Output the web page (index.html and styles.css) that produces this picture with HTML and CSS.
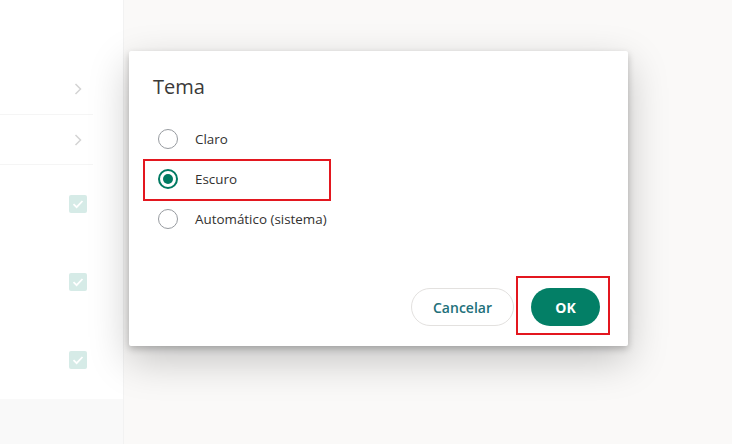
FILE: index.html
```html
<!DOCTYPE html>
<html lang="pt">
<head>
<meta charset="utf-8">
<title>Tema</title>
<link rel="stylesheet" href="styles.css">
</head>
<body>
<div class="app">
  <aside class="side">
    <div class="side-head"></div>
    <div class="row nav"><span class="icon chev"><svg width="8" height="12" viewBox="0 0 8 12"><path d="M1.5 1 L6.5 6 L1.5 11" fill="none" stroke="#d4d4d4" stroke-width="1.5"/></svg></span></div>
    <div class="row nav"><span class="icon chev"><svg width="8" height="12" viewBox="0 0 8 12"><path d="M1.5 1 L6.5 6 L1.5 11" fill="none" stroke="#d4d4d4" stroke-width="1.5"/></svg></span></div>
    <div class="row check"><span class="icon box"><svg width="18" height="18" viewBox="0 0 18 18"><path d="M4.5 9.2 L7.6 12.2 L13.5 6" fill="none" stroke="#fff" stroke-width="1.8"/></svg></span></div>
    <div class="row check"><span class="icon box"><svg width="18" height="18" viewBox="0 0 18 18"><path d="M4.5 9.2 L7.6 12.2 L13.5 6" fill="none" stroke="#fff" stroke-width="1.8"/></svg></span></div>
    <div class="row check"><span class="icon box"><svg width="18" height="18" viewBox="0 0 18 18"><path d="M4.5 9.2 L7.6 12.2 L13.5 6" fill="none" stroke="#fff" stroke-width="1.8"/></svg></span></div>
    <div class="side-foot"></div>
  </aside>
  <main class="content"></main>
</div>

<div class="dialog" role="dialog" aria-labelledby="dlg-title">
  <h2 class="dlg-title" id="dlg-title">Tema</h2>
  <div class="options">
    <label class="opt"><span class="radio"></span><span class="opt-text">Claro</span></label>
    <label class="opt"><span class="radio on"></span><span class="opt-text">Escuro</span></label>
    <label class="opt"><span class="radio"></span><span class="opt-text">Automático (sistema)</span></label>
  </div>
  <div class="actions">
    <button class="btn secondary">Cancelar</button>
    <button class="btn primary">OK</button>
  </div>
</div>

<div class="mark mark-escuro"></div>
<div class="mark mark-ok"></div>
</body>
</html>
```

FILE: styles.css
```css
* { box-sizing: border-box; }
html, body { margin: 0; padding: 0; }
body {
  width: 732px;
  height: 444px;
  overflow: hidden;
  font-family: "Open Sans", "Noto Sans", sans-serif;
  background: #faf9f8;
  position: relative;
}
.app {
  display: flex;
  height: 444px;
}
.side {
  width: 124px;
  background: #ffffff;
  border-right: 1px solid #f2f2f2;
  display: flex;
  flex-direction: column;
}
.side-head { height: 63px; }
.row {
  width: 93px;
  display: flex;
  align-items: center;
  justify-content: flex-end;
  padding-right: 6px;
}
.row.nav { height: 52px; border-bottom: 1px solid #f5f5f5; }
.row.nav + .row.nav { height: 50px; }
.row.check { height: 78px; }
.side-foot { flex: 1; background: #f9f9f9; width: 123px; }
.icon { width: 18px; height: 18px; display: flex; align-items: center; justify-content: center; }
.icon.box { background: #d6ebe7; border-radius: 2px; }
.icon svg { display: block; }
.content { flex: 1; }

.dialog {
  position: absolute;
  left: 129px;
  top: 51px;
  width: 499px;
  height: 295px;
  background: #ffffff;
  border-radius: 2px;
  box-shadow: 0 3px 7px rgba(0,0,0,0.22), 0 14px 40px rgba(0,0,0,0.22);
  padding: 22px 28px 20px 24px;
  display: flex;
  flex-direction: column;
}
.dlg-title {
  margin: 0;
  font-size: 20px;
  line-height: 28px;
  font-weight: 400;
  color: #3b3a39;
}
.options {
  margin-top: 18px;
  display: flex;
  flex-direction: column;
  padding-left: 5px;
}
.opt {
  height: 40px;
  display: flex;
  align-items: center;
  gap: 17px;
  font-size: 13.4px;
  color: #323130;
}
.radio {
  width: 20px;
  height: 20px;
  border-radius: 50%;
  border: 1.5px solid #979ba0;
  position: relative;
  flex: none;
}
.radio.on { border: 2px solid #017a62; }
.radio.on::after {
  content: "";
  position: absolute;
  left: 3px; top: 3px;
  width: 10px; height: 10px;
  border-radius: 50%;
  background: #017a62;
}
.actions {
  margin-top: auto;
  display: flex;
  justify-content: flex-end;
  gap: 17px;
}
.btn {
  height: 38px;
  border-radius: 19px;
  font-family: inherit;
  font-size: 14px;
  font-weight: 700;
  cursor: pointer;
}
.btn.secondary {
  width: 103px;
  background: #ffffff;
  border: 1px solid #e3e1df;
  color: #22707a;
  font-weight: 600;
}
.btn.primary {
  width: 69px;
  background: #037f66;
  border: none;
  color: #ffffff;
}
.mark {
  position: absolute;
  border: 2px solid #e3171f;
}
.mark-escuro { left: 143px; top: 159px; width: 188px; height: 42px; }
.mark-ok { left: 516px; top: 276px; width: 94px; height: 59px; }
```
